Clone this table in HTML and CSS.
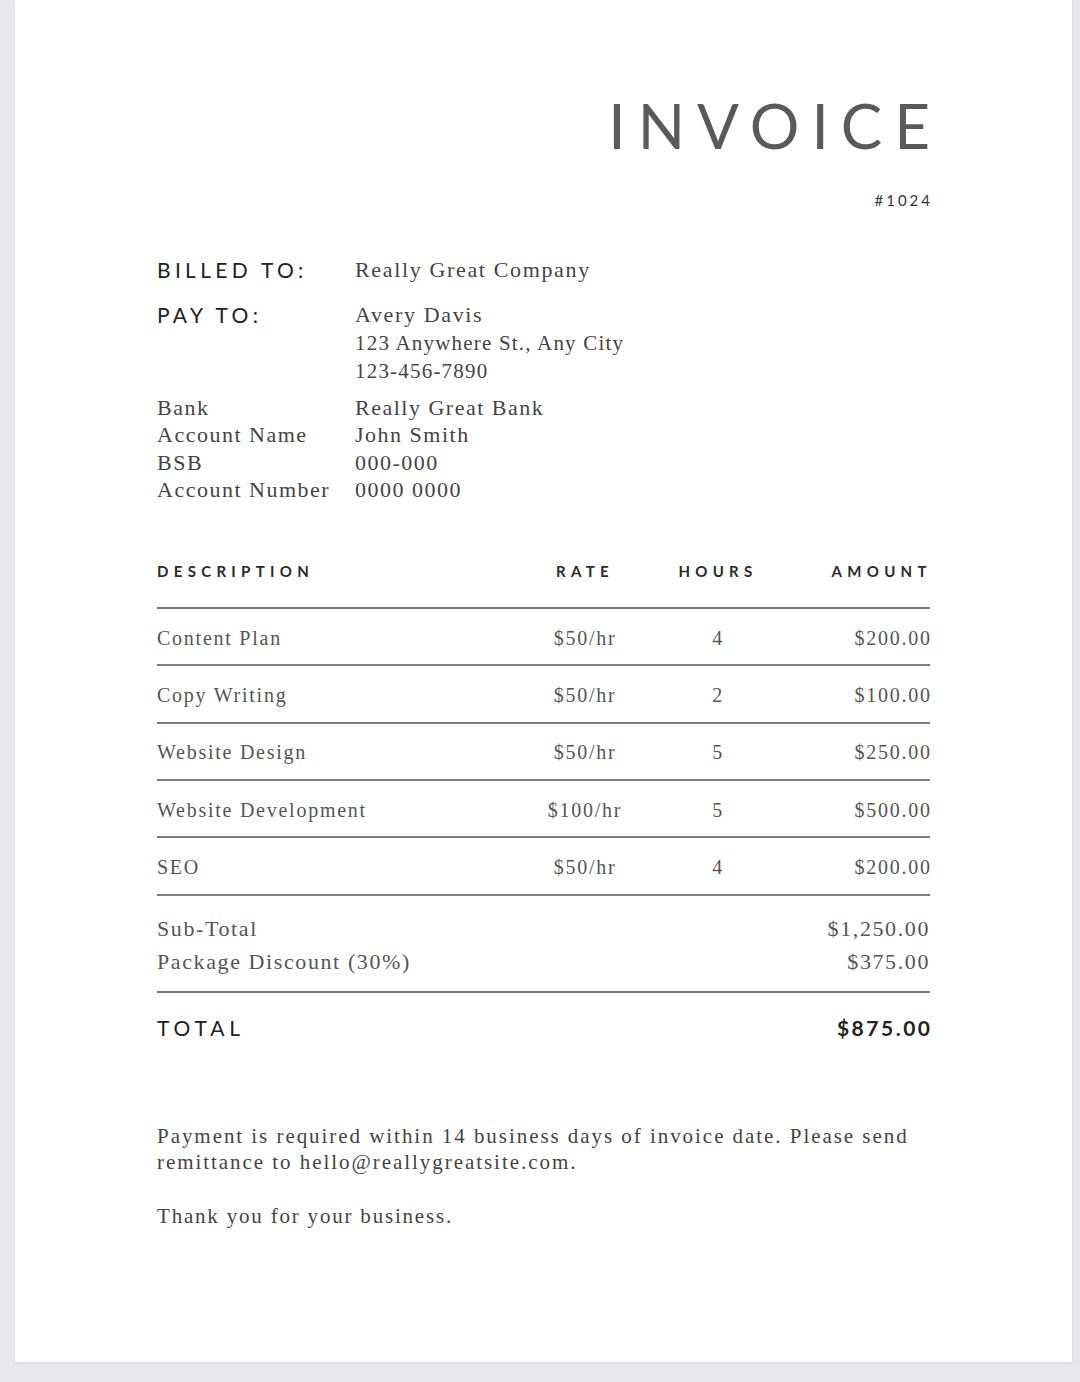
FILE: index.html
```html
<!DOCTYPE html>
<html lang="en">
<head>
<meta charset="utf-8">
<title>Invoice</title>
<link rel="stylesheet" href="styles.css">
</head>
<body>
<div class="paper">
  <header class="head">
    <h1 class="title">INVOICE</h1>
    <div class="number">#1024</div>
  </header>

  <section class="meta">
    <div class="meta-row billed">
      <div class="label">BILLED TO:</div>
      <div class="value">Really Great Company</div>
    </div>
    <div class="meta-row pay">
      <div class="label">PAY TO:</div>
      <div class="value">
        <div>Avery Davis</div>
        <div class="addr">123 Anywhere St., Any City</div>
        <div class="addr">123-456-7890</div>
      </div>
    </div>
    <div class="bank">
      <div class="bank-k">Bank</div><div class="bank-v">Really Great Bank</div>
      <div class="bank-k">Account Name</div><div class="bank-v">John Smith</div>
      <div class="bank-k">BSB</div><div class="bank-v">000-000</div>
      <div class="bank-k">Account Number</div><div class="bank-v">0000 0000</div>
    </div>
  </section>

  <section class="table">
    <div class="tr th">
      <div class="c-desc">DESCRIPTION</div>
      <div class="c-rate">RATE</div>
      <div class="c-hours">HOURS</div>
      <div class="c-amt">AMOUNT</div>
    </div>
    <div class="tr">
      <div class="c-desc">Content Plan</div>
      <div class="c-rate">$50/hr</div>
      <div class="c-hours">4</div>
      <div class="c-amt">$200.00</div>
    </div>
    <div class="tr">
      <div class="c-desc">Copy Writing</div>
      <div class="c-rate">$50/hr</div>
      <div class="c-hours">2</div>
      <div class="c-amt">$100.00</div>
    </div>
    <div class="tr">
      <div class="c-desc">Website Design</div>
      <div class="c-rate">$50/hr</div>
      <div class="c-hours">5</div>
      <div class="c-amt">$250.00</div>
    </div>
    <div class="tr">
      <div class="c-desc">Website Development</div>
      <div class="c-rate">$100/hr</div>
      <div class="c-hours">5</div>
      <div class="c-amt">$500.00</div>
    </div>
    <div class="tr last">
      <div class="c-desc">SEO</div>
      <div class="c-rate">$50/hr</div>
      <div class="c-hours">4</div>
      <div class="c-amt">$200.00</div>
    </div>
  </section>

  <section class="sums">
    <div class="sum-row"><span>Sub-Total</span><span>$1,250.00</span></div>
    <div class="sum-row"><span>Package Discount (30%)</span><span>$375.00</span></div>
  </section>

  <div class="total">
    <span class="total-label">TOTAL</span>
    <span class="total-val">$875.00</span>
  </div>

  <p class="note">Payment is required within 14 business days of invoice date. Please send remittance to hello@reallygreatsite.com.</p>
  <p class="thanks">Thank you for your business.</p>
</div>
</body>
</html>
```

FILE: styles.css
```css
* { box-sizing: border-box; }

html, body {
  margin: 0;
  padding: 0;
}

body {
  background: #e7e7ec;
  width: 1080px;
  height: 1382px;
  overflow: hidden;
}

.paper {
  margin-left: 15px;
  width: 1057px;
  height: 1362px;
  background: #fff;
  box-shadow: 0 1px 3px rgba(0,0,0,0.08);
  padding: 90px 142px 0 142px;
  font-family: "Liberation Serif", "Times New Roman", serif;
  color: #3d3d3d;
}

/* header */
.head {
  display: flex;
  flex-direction: column;
  align-items: flex-end;
}

.title {
  margin: 0 -12px 0 0;
  font-family: Lato, "Noto Sans", sans-serif;
  font-weight: 400;
  font-size: 62px;
  line-height: 70px;
  letter-spacing: 12px;
  color: #5a5a5a;
}

.number {
  margin-top: 30px;
  margin-right: -3px;
  font-family: Lato, "Noto Sans", sans-serif;
  font-size: 15px;
  line-height: 20px;
  letter-spacing: 3px;
  color: #333;
}

/* meta */
.meta {
  margin-top: 46px;
}

.meta-row {
  display: grid;
  grid-template-columns: 198px 1fr;
}

.meta-row .label {
  font-family: Lato, "Noto Sans", sans-serif;
  font-size: 21px;
  letter-spacing: 4.3px;
  color: #222;
  line-height: 28px;
}

.meta-row .value {
  font-size: 22px;
  letter-spacing: 1.65px;
  line-height: 28px;
  color: #444;
}

.meta-row .value .addr {
  font-size: 21px;
  letter-spacing: 1.2px;
}

.meta-row.pay {
  margin-top: 17px;
}

.bank {
  margin-top: 9px;
  display: grid;
  grid-template-columns: 198px 1fr;
  font-size: 22px;
  letter-spacing: 1.5px;
  line-height: 27.3px;
  color: #444;
}

/* table */
.table {
  margin-top: 48px;
}

.tr {
  display: grid;
  grid-template-columns: 1fr 130px 136px 144px;
  align-items: center;
  height: 57.3px;
  padding-top: 3px;
  border-top: 2px solid #7c7c7c;
  font-size: 20px;
  letter-spacing: 1.75px;
  color: #555;
}

.tr.last {
  border-bottom: 2px solid #7c7c7c;
  height: 59.3px;
}

.tr.th {
  border-top: none;
  height: 56px;
  padding-top: 0;
  padding-bottom: 16px;
  font-family: Lato, "Noto Sans", sans-serif;
  font-size: 15px;
  font-weight: 700;
  letter-spacing: 5.3px;
  color: #2a2a2a;
}

.c-desc { text-align: left; }
.c-rate { text-align: center; }
.c-hours { text-align: center; }
.c-amt { text-align: right; }

.th .c-amt { margin-right: -5.3px; }
.tr .c-amt { margin-right: -1.75px; }

/* sums */
.sums {
  padding: 16px 0 13px 0;
  border-bottom: 2px solid #7c7c7c;
}

.sum-row {
  display: flex;
  justify-content: space-between;
  font-size: 22px;
  letter-spacing: 1.6px;
  line-height: 33px;
  color: #555;
}

.total {
  margin-top: 15px;
  display: flex;
  justify-content: space-between;
  align-items: center;
  height: 40px;
  font-family: Lato, "Noto Sans", sans-serif;
  font-size: 21px;
  color: #222;
}

.total-label {
  letter-spacing: 4.8px;
}

.total-val {
  letter-spacing: 2.5px;
  margin-right: -2.5px;
  font-weight: 700;
}

.note {
  margin: 75px 0 0 0;
  font-size: 21px;
  letter-spacing: 1.95px;
  line-height: 26px;
  color: #444;
  max-width: 790px;
}

.thanks {
  margin: 28px 0 0 0;
  font-size: 21px;
  letter-spacing: 1.8px;
  line-height: 26px;
  color: #444;
}
```
